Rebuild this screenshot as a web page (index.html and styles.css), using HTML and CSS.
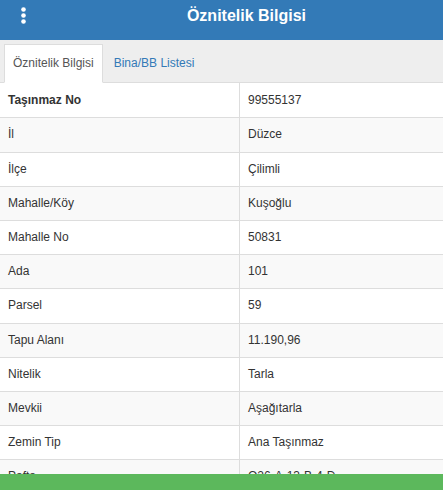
FILE: index.html
```html
<!DOCTYPE html>
<html lang="tr">
<head>
<meta charset="utf-8">
<title>Öznitelik Bilgisi</title>
<link rel="stylesheet" href="styles.css">
</head>
<body>
<header class="topbar">
  <span class="menu-btn">
    <svg class="menu-icon" width="5" height="17" viewBox="0 0 5 17">
      <circle cx="2.5" cy="2.5" r="2.3" fill="#fff"/>
      <circle cx="2.5" cy="8.5" r="2.3" fill="#fff"/>
      <circle cx="2.5" cy="14.5" r="2.3" fill="#fff"/>
    </svg>
  </span>
  <h1 class="title">Öznitelik Bilgisi</h1>
</header>
<nav class="tabs">
  <a class="tab tab-active">Öznitelik Bilgisi</a>
  <a class="tab">Bina/BB Listesi</a>
</nav>
<table class="info-table">
  <tbody>
    <tr><td class="label strong">Taşınmaz No</td><td class="value">99555137</td></tr>
    <tr><td class="label">İl</td><td class="value">Düzce</td></tr>
    <tr><td class="label">İlçe</td><td class="value">Çilimli</td></tr>
    <tr><td class="label">Mahalle/Köy</td><td class="value">Kuşoğlu</td></tr>
    <tr><td class="label">Mahalle No</td><td class="value">50831</td></tr>
    <tr><td class="label">Ada</td><td class="value">101</td></tr>
    <tr><td class="label">Parsel</td><td class="value">59</td></tr>
    <tr><td class="label">Tapu Alanı</td><td class="value">11.190,96</td></tr>
    <tr><td class="label">Nitelik</td><td class="value">Tarla</td></tr>
    <tr><td class="label">Mevkii</td><td class="value">Aşağıtarla</td></tr>
    <tr><td class="label">Zemin Tip</td><td class="value">Ana Taşınmaz</td></tr>
    <tr><td class="label">Pafta</td><td class="value">O26-A-13-B-4-D</td></tr>
  </tbody>
</table>
<div class="bottom-bar"></div>
</body>
</html>
```

FILE: styles.css
```css
html, body {
  margin: 0;
  padding: 0;
  background: #fff;
}
body {
  font-family: "Liberation Sans", Arial, sans-serif;
  font-size: 12px;
  color: #333;
  overflow: hidden;
}
.topbar {
  display: flex;
  align-items: flex-start;
  height: 40px;
  background: #337ab7;
}
.menu-btn {
  display: flex;
  align-items: center;
  width: 50px;
  height: 31px;
  padding-left: 20.5px;
  box-sizing: border-box;
}
.menu-icon {
  display: block;
}
.title {
  flex: 1;
  margin: 0;
  font-size: 16px;
  font-weight: bold;
  line-height: 31px;
  color: #fff;
  text-align: center;
}
.tabs {
  display: flex;
  padding: 4px 0 0 4px;
  background: #eee;
  border-bottom: 1px solid #ddd;
}
.tab {
  display: block;
  padding: 10px 8px;
  margin-right: 2px;
  margin-bottom: -1px;
  line-height: 17.14px;
  border: 1px solid transparent;
  color: #337ab7;
  cursor: pointer;
}
.tab-active {
  background: #fff;
  color: #555;
  border-color: #ddd;
  border-bottom-color: #fff;
}
.info-table {
  width: 100%;
  border-collapse: separate;
  border-spacing: 0;
  table-layout: fixed;
}
.info-table td {
  padding: 8px;
  line-height: 17.2px;
  border-bottom: 1px solid #ddd;
  vertical-align: top;
  white-space: nowrap;
}
.info-table tr:first-child td {
  padding-top: 9px;
}
.info-table tr:nth-child(even) td {
  background: #f9f9f9;
}
.label {
  width: 240px;
  box-sizing: border-box;
  border-right: 1px solid #ddd;
}
.strong {
  font-weight: bold;
}
.bottom-bar {
  position: fixed;
  left: 0;
  right: 0;
  bottom: 0;
  height: 16px;
  background: #5cb85c;
}
```
